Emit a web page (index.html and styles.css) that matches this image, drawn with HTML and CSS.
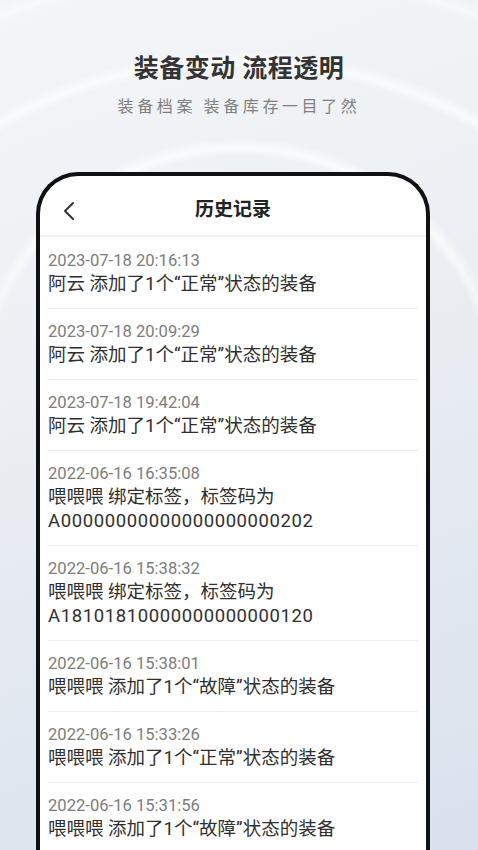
FILE: index.html
```html
<!DOCTYPE html>
<html lang="zh-CN">
<head>
    <meta charset="UTF-8">
    <meta name="viewport" content="width=device-width, initial-scale=1.0">
    <title>历史记录</title>
    <link rel="stylesheet" href="styles.css">
</head>
<body>

<div class="page">
    <div class="hero">
        <h1>装备变动 流程透明</h1>
        <p>装备档案 装备库存一目了然</p>
    </div>

    <!-- phone mockup -->
    <div class="phone">
        <div class="topbar">
            <svg class="back" width="14" height="20" viewBox="0 0 14 20">
                <path d="M11 2 L3 10 L11 18" fill="none" stroke="#333" stroke-width="2" stroke-linecap="round" stroke-linejoin="round"/>
            </svg>
            <div class="title">历史记录</div>
        </div>

        <ul class="records">
            <li>
                <div class="time">2023-07-18 20:16:13</div>
                <div class="text">阿云 添加了1个“正常”状态的装备</div>
            </li>
            <li>
                <div class="time">2023-07-18 20:09:29</div>
                <div class="text">阿云 添加了1个“正常”状态的装备</div>
            </li>
            <li>
                <div class="time">2023-07-18 19:42:04</div>
                <div class="text">阿云 添加了1个“正常”状态的装备</div>
            </li>
            <li>
                <div class="time">2022-06-16 16:35:08</div>
                <div class="text">喂喂喂 绑定标签，标签码为<br><span class="code">A00000000000000000000202</span></div>
            </li>
            <li>
                <div class="time">2022-06-16 15:38:32</div>
                <div class="text">喂喂喂 绑定标签，标签码为<br><span class="code">A18101810000000000000120</span></div>
            </li>
            <li>
                <div class="time">2022-06-16 15:38:01</div>
                <div class="text">喂喂喂 添加了1个“故障”状态的装备</div>
            </li>
            <li>
                <div class="time">2022-06-16 15:33:26</div>
                <div class="text">喂喂喂 添加了1个“正常”状态的装备</div>
            </li>
            <li>
                <div class="time">2022-06-16 15:31:56</div>
                <div class="text">喂喂喂 添加了1个“故障”状态的装备</div>
            </li>
        </ul>
    </div>
</div>

</body>
</html>
```

FILE: styles.css
```css
* {
    box-sizing: border-box;
}
body {
    margin: 0;
    font-family: Roboto, "Noto Sans CJK SC", sans-serif;
    background: #e8ecf2;
}
.page {
    position: relative;
    width: 478px;
    height: 850px;
    overflow: hidden;
    background: linear-gradient(160deg, #f3f5f8 0%, #edf0f4 35%, #e2e8f0 70%, #d9e2ed 100%);
}
/* soft white arcs behind the heading */
.page::before {
    content: "";
    position: absolute;
    left: 0;
    top: 0;
    width: 478px;
    height: 420px;
    background:
        radial-gradient(circle at 50% 549px, transparent 479px, rgba(255,255,255,0.65) 488px, transparent 499px),
        radial-gradient(circle at 50% 412px, transparent 255px, rgba(255,255,255,0.7) 264px, transparent 275px),
        radial-gradient(circle at 50% 640px, transparent 660px, rgba(255,255,255,0.45) 668px, transparent 680px);
    -webkit-mask-image: linear-gradient(180deg, #000 55%, transparent 100%);
    mask-image: linear-gradient(180deg, #000 55%, transparent 100%);
}
.hero {
    position: relative;
    padding-top: 53px;
    text-align: center;
}
.hero h1 {
    margin: 0;
    font-size: 25px;
    line-height: 32px;
    font-weight: bold;
    color: #333;
    letter-spacing: 0.5px;
}
.hero p {
    margin: 10px 0 0;
    font-size: 16px;
    line-height: 24px;
    color: #808080;
    letter-spacing: 3.6px;
}
.phone {
    position: relative;
    margin: 53px 48px 0 36px;
    height: 700px;
    background: #fff;
    border: 4px solid #111;
    border-bottom: none;
    border-radius: 42px 42px 0 0;
}
.topbar {
    position: relative;
    height: 61px;
    border-bottom: 2px solid #f3f3f3;
    display: flex;
    align-items: center;
    justify-content: center;
}
.back {
    position: absolute;
    left: 22px;
    top: 25px;
}
.title {
    font-size: 19px;
    font-weight: bold;
    color: #222;
    margin-top: 4px;
}
.records {
    list-style: none;
    margin: 0;
    padding: 0 8px;
}
.records li {
    padding: 12px 0 12px;
    border-bottom: 1px solid #eeeeee;
}
.records li:first-child {
    padding-top: 13px;
}
.time {
    font-size: 16.6px;
    line-height: 22px;
    color: #7c7c7c;
}
.text {
    font-size: 18.5px;
    line-height: 24px;
    color: #2f2f2f;
}
.code {
    letter-spacing: 0.6px;
}
```
